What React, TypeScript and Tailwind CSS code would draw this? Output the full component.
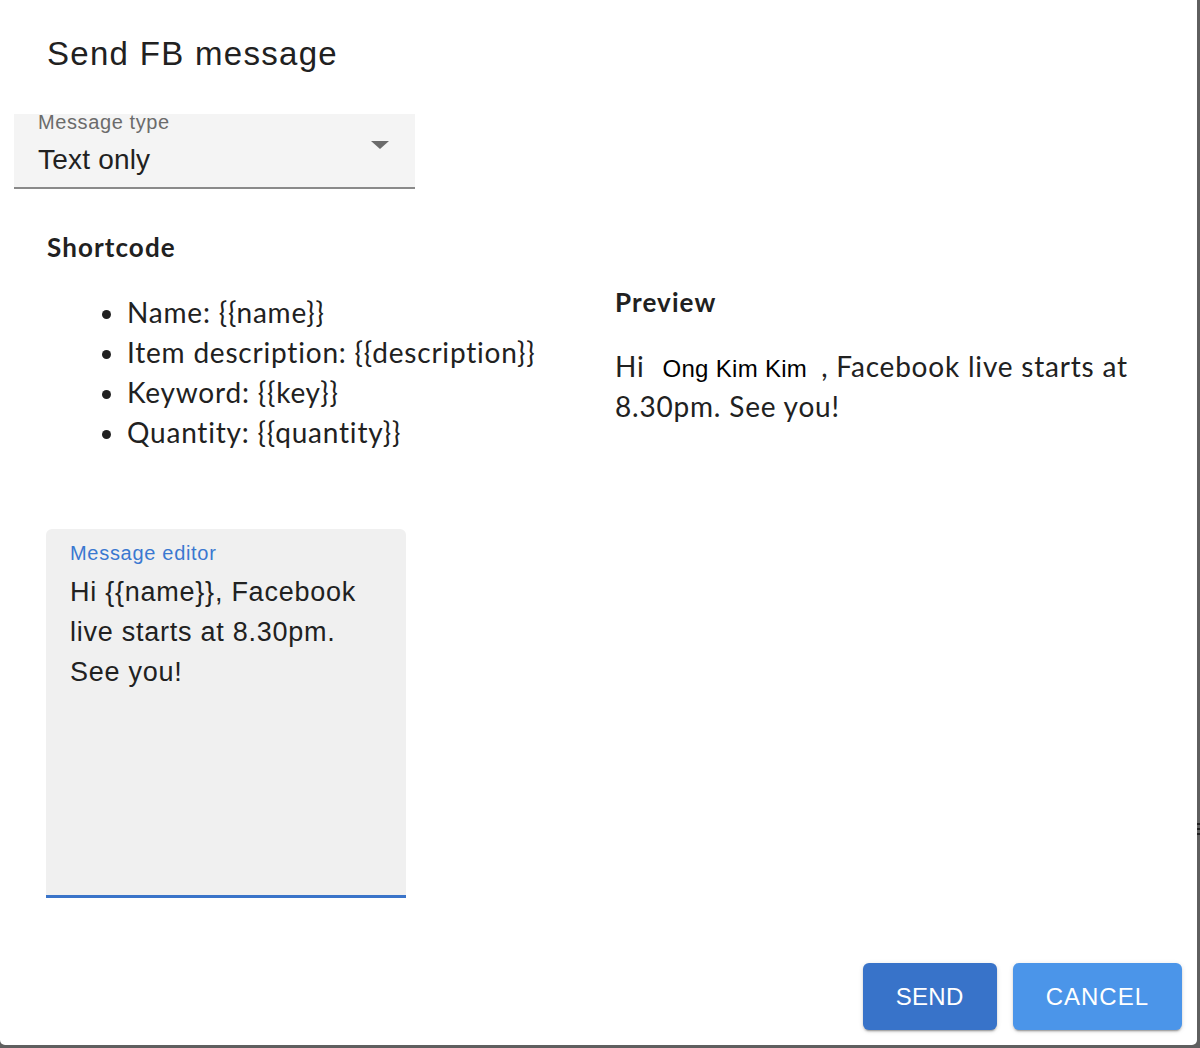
import { ReactNode } from "react";

const sans = "font-['Liberation_Sans',Arial,sans-serif]";
const lato = "font-['Lato',sans-serif]";

const shortcodes = [
  "Name: {{name}}",
  "Item description: {{description}}",
  "Keyword: {{key}}",
  "Quantity: {{quantity}}",
];

const buttonShadow =
  "shadow-[0_3px_1px_-2px_rgba(0,0,0,0.2),0_2px_2px_0_rgba(0,0,0,0.14),0_1px_5px_0_rgba(0,0,0,0.12)]";

const Heading = ({ children }: { children: ReactNode }) => (
  <h2 className={`${lato} text-[26px] leading-[30px] tracking-[1.1px] font-bold text-[#212121]`}>{children}</h2>
);

const SelectField = () => (
  <div className="ml-[14px] w-[401px] bg-[#f4f4f4] border-b-2 border-[#8a8a8a] pl-6 pr-[26px] pb-[8px]">
    <div className={`${sans} relative -top-[2px] text-[20px] leading-[20px] tracking-[0.6px] text-[#6b6b6b]`}>
      Message type
    </div>
    <div className="mt-[7px] flex items-center justify-between">
      <span className={`${sans} text-[28px] leading-[36px] tracking-[0.2px] text-[#212121]`}>Text only</span>
      <svg width="18" height="8" viewBox="0 0 18 8" className="mb-[30px]">
        <path d="M0 0h18L9 8z" fill="#6b6b6b" />
      </svg>
    </div>
  </div>
);

const MessageEditor = () => (
  <div className="w-[360px] h-[369px] bg-[#f0f0f0] rounded-t-[6px] border-b-[3px] border-[#3a74c9] pl-6 pr-5 pt-3">
    <div className={`${sans} text-[20px] leading-[24px] tracking-[0.7px] text-[#3a78d0]`}>Message editor</div>
    <p className={`${sans} mt-[7px] text-[27px] leading-[40px] tracking-[0.75px] text-[#212121]`}>
      Hi {"{{name}}"}, Facebook live starts at 8.30pm. See you!
    </p>
  </div>
);

export default function App() {
  return (
    <div className="w-[1200px] h-[1048px] bg-[#5f5f5f] flex overflow-hidden">
      <div className="w-[1197px] h-[1045px] bg-white rounded-b-[5px] flex flex-col">
        <h1 className={`${sans} mt-[34px] ml-[47px] text-[33px] leading-[40px] tracking-[1.3px] text-[#212121]`}>
          Send FB message
        </h1>

        <div className="mt-[40px]">
          <SelectField />
        </div>

        <div className="flex mt-[43px] pl-[47px]">
          <div className="w-[568px] flex flex-col">
            <Heading>Shortcode</Heading>
            <ul className={`${lato} mt-[30px] ml-[80px] list-disc text-[28px] leading-[40px] tracking-[0.8px] text-[#212121]`}>
              {shortcodes.map((s) => (
                <li key={s}>{s}</li>
              ))}
            </ul>
            <div className="mt-[77px] -ml-px">
              <MessageEditor />
            </div>
          </div>

          <div className="flex-1 pt-[55px]">
            <Heading>Preview</Heading>
            <p className={`${lato} mt-[29px] pr-10 text-[28px] leading-[40px] tracking-[0.8px] text-[#212121]`}>
              Hi{" "}
              <span className={`${sans} inline-block pl-[10px] pr-[14px] text-[24px] leading-[28px] tracking-[0.3px] text-black`}>
                Ong Kim Kim
              </span>
              , Facebook live starts at 8.30pm. See you!
            </p>
          </div>
        </div>

        <div className="mt-auto flex justify-end gap-4 pr-[15px] pb-[15px]">
          <button className={`${sans} h-[67px] px-[33px] rounded-[6px] bg-[#3873c9] text-white text-[24px] tracking-[0.3px] ${buttonShadow}`}>
            SEND
          </button>
          <button className={`${sans} h-[67px] px-[33px] rounded-[6px] bg-[#4b95e9] text-white text-[24px] tracking-[1px] ${buttonShadow}`}>
            CANCEL
          </button>
        </div>
      </div>
      <div className="flex-1 flex flex-col gap-[3px] pt-[823px]">
        <div className="h-[2px] bg-[#222]" />
        <div className="h-[2px] bg-[#222]" />
        <div className="h-[2px] bg-[#222]" />
      </div>
    </div>
  );
}
